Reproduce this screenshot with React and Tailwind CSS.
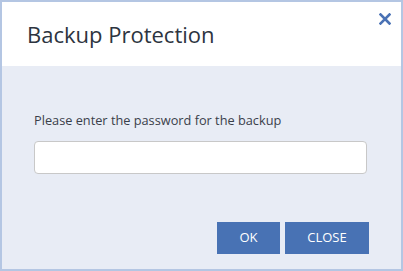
import React, { useState } from 'react';

const CloseIcon = () => (
  <svg width="12" height="12" viewBox="0 0 12 12" fill="none">
    <path d="M1.5 1.5 L10.5 10.5 M10.5 1.5 L1.5 10.5" stroke="#4a72b5" strokeWidth="2.6" strokeLinecap="square" />
  </svg>
);

const App = () => {
  const [password, setPassword] = useState('');

  return (
    <div className="w-[403px] h-[271px] border-2 border-[#b4c6e3] flex flex-col font-['Open_Sans',sans-serif] text-[#333a44]">
      <div className="relative h-[64px] bg-white pl-[25px] pt-[17px]">
        <h1 className="text-[22px] leading-[30px] text-[#2d3440]">Backup Protection</h1>
        <button type="button" className="absolute top-[11px] right-[10px] p-0">
          <CloseIcon />
        </button>
      </div>
      <div className="flex-1 bg-[#e8ecf5] px-[32px] pt-[45px]">
        <label className="block text-[12.75px] leading-[18px] text-[#3a404a]">
          Please enter the password for the backup
        </label>
        <input
          type="password"
          value={password}
          onChange={(e) => setPassword(e.target.value)}
          className="mt-[12px] w-[333px] h-[33px] bg-white border border-[#c8c8c8] rounded-[4px] px-2 outline-none"
        />
        <div className="mt-[48px] flex justify-end gap-[5px]">
          <button type="button" className="w-[63px] h-[32px] bg-[#4872b4] text-white text-[13px]">
            OK
          </button>
          <button type="button" className="w-[84px] h-[32px] bg-[#4872b4] text-white text-[13px]">
            CLOSE
          </button>
        </div>
      </div>
    </div>
  );
};

export default App;
